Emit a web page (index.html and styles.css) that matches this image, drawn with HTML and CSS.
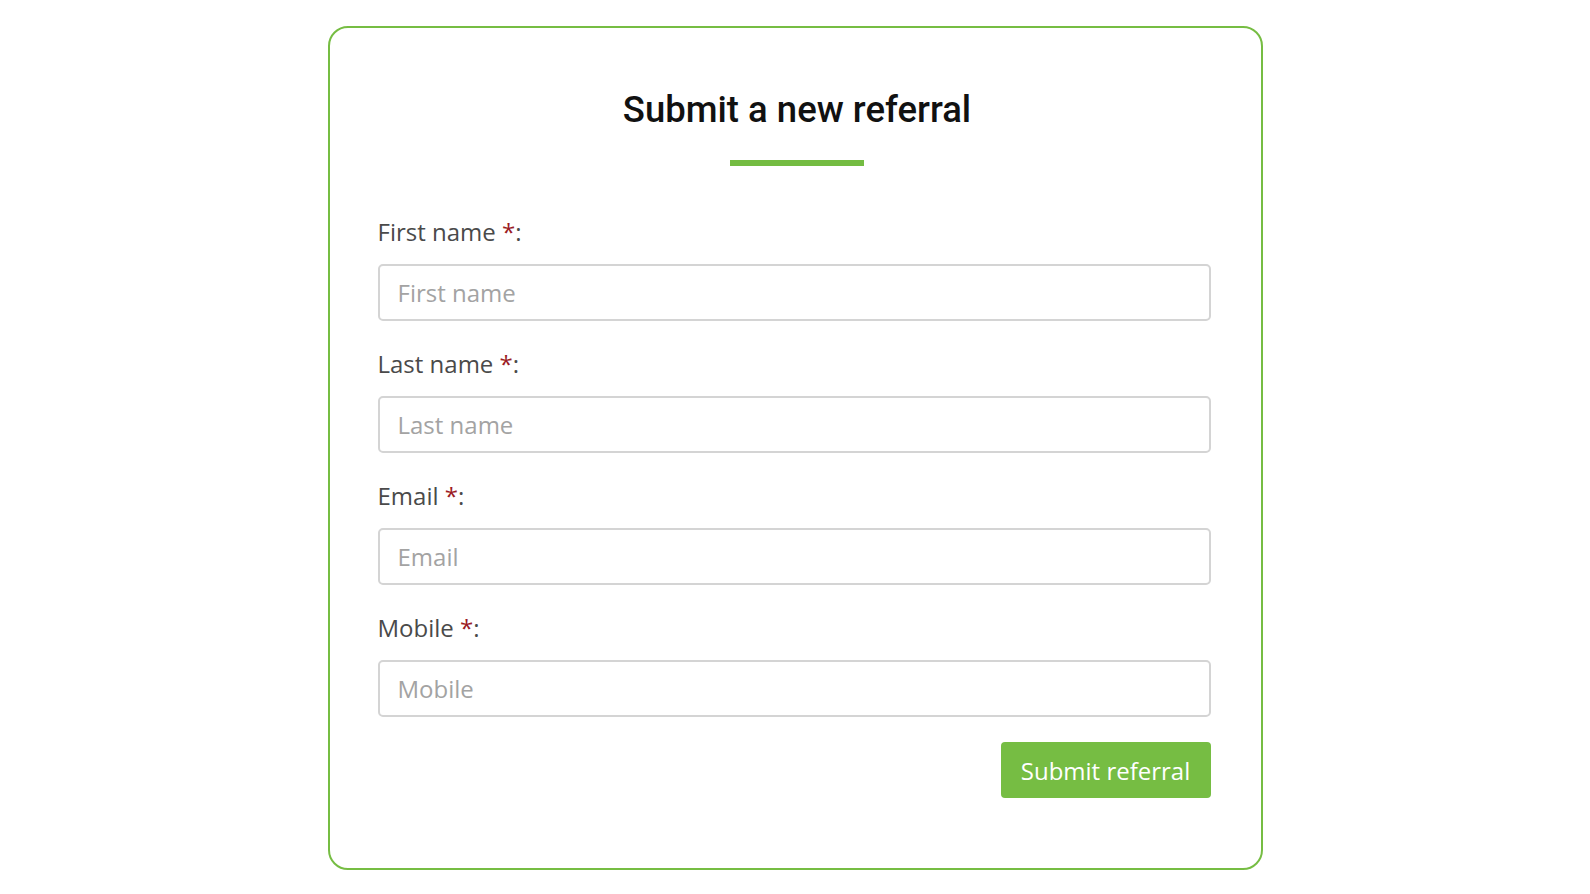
FILE: index.html
```html
<!DOCTYPE html>
<html lang="en">
<head>
<meta charset="utf-8">
<title>Submit a new referral</title>
<link rel="stylesheet" href="styles.css">
</head>
<body>
<main class="page">
  <form class="card">
    <header class="head">
      <h1 class="title">Submit a new referral</h1>
      <div class="rule"></div>
    </header>
    <div class="fields">
      <div class="field">
        <label class="label" for="fn">First name <span class="req">*</span>:</label>
        <input class="input" id="fn" type="text" placeholder="First name">
      </div>
      <div class="field">
        <label class="label" for="ln">Last name <span class="req">*</span>:</label>
        <input class="input" id="ln" type="text" placeholder="Last name">
      </div>
      <div class="field">
        <label class="label" for="em">Email <span class="req">*</span>:</label>
        <input class="input" id="em" type="text" placeholder="Email">
      </div>
      <div class="field">
        <label class="label" for="mo">Mobile <span class="req">*</span>:</label>
        <input class="input" id="mo" type="text" placeholder="Mobile">
      </div>
    </div>
    <div class="actions">
      <button class="btn" type="button">Submit referral</button>
    </div>
  </form>
</main>
</body>
</html>
```

FILE: styles.css
```css
* { box-sizing: border-box; }
html, body { margin: 0; padding: 0; background: #ffffff; }
body { font-family: "Open Sans", "Liberation Sans", sans-serif; }
.page {
  display: flex;
  justify-content: center;
  padding-top: 26px;
}
.card {
  width: 935px;
  height: 844px;
  border: 2.5px solid #76bd43;
  border-radius: 20px;
  padding: 0 50px 0 48px;
  display: flex;
  flex-direction: column;
}
.head {
  padding-left: 6px;
  display: flex;
  flex-direction: column;
  align-items: center;
}
.title {
  margin: 60px 0 0 0;
  font-family: Roboto, "Liberation Sans", sans-serif;
  font-weight: 500;
  font-size: 36.5px;
  line-height: 44px;
  color: #111;
  text-align: center;
}
.rule {
  width: 134px;
  height: 6px;
  background: #74bc42;
  margin-top: 28px;
}
.fields {
  margin-top: 48px;
  display: flex;
  flex-direction: column;
  gap: 25px;
}
.field {
  display: flex;
  flex-direction: column;
  gap: 14px;
}
.label {
  font-size: 24px;
  line-height: 36px;
  color: #4a4a4a;
}
.req { color: #9b1b24; }
.input {
  height: 57px;
  width: 100%;
  border: 2px solid #d4d4d4;
  border-radius: 5px;
  padding: 0 18px;
  font-family: "Open Sans", "Liberation Sans", sans-serif;
  font-size: 24px;
  color: #333;
  background: #fff;
  outline: none;
}
.input::placeholder { color: #a3a3a3; }
.actions {
  display: flex;
  justify-content: flex-end;
  margin-top: 25px;
}
.btn {
  width: 210px;
  height: 56px;
  background: #76bd43;
  color: #fff;
  border: none;
  border-radius: 4px;
  font-family: "Open Sans", "Liberation Sans", sans-serif;
  font-size: 24px;
  padding: 0;
}
```
